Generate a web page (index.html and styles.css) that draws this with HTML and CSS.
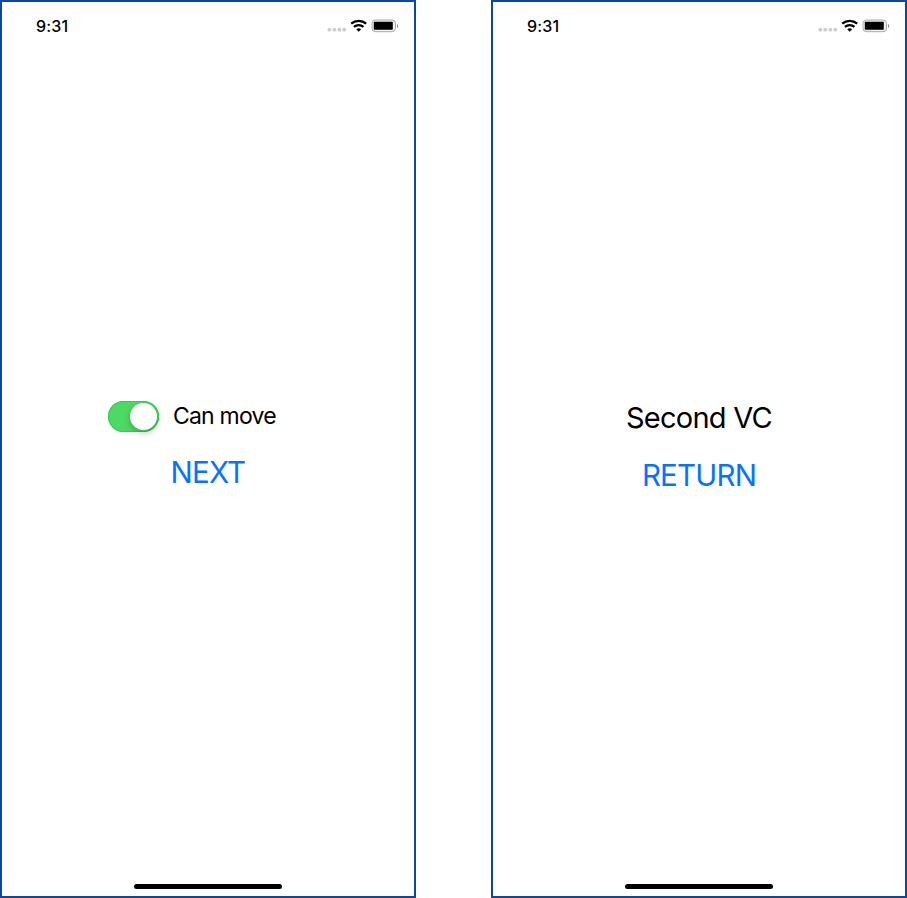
FILE: index.html
```html
<!DOCTYPE html>
<html lang="en">
<head>
<meta charset="utf-8">
<title>Can move</title>
<link rel="stylesheet" href="styles.css">
</head>
<body>
<main class="screens">
  <section class="phone">
    <header class="status">
      <span class="time">9:31</span>
      <svg class="indicators" width="72" height="16" viewBox="0 0 72 16">
        <g fill="#ccc"><circle cx="3.300" cy="12.700" r="1.900"/><circle cx="8.300" cy="12.700" r="1.900"/><circle cx="13.300" cy="12.700" r="1.900"/><circle cx="18.200" cy="12.700" r="1.900"/></g>
        <g fill="none" stroke="#000" stroke-width="2.2"><path d="M25.2 6.7a11.500 11.500 0 0 1 15 0"/><path d="M27.900 9.900a7.300 7.300 0 0 1 9.600 0"/></g>
        <path d="M30.200 12.200a4 4 0 0 1 5 0L32.700 14.700z"/>
        <rect x="46" y="3" width="23.500" height="11.700" rx="3.500" fill="#eee" stroke="#aaa"/>
        <rect x="47.800" y="4.800" width="19" height="8" rx=".7"/>
        <path d="M71 7v4q1-.7 1-2t-1-2" fill="#777"/>
      </svg>
    </header>
    <div class="content">
      <div class="setting">
        <span class="switch"><span class="knob"></span></span>
        <span class="label">Can move</span>
      </div>
      <a class="action next">NEXT</a>
    </div>
    <div class="home"></div>
  </section>
  <section class="phone">
    <header class="status">
      <span class="time">9:31</span>
      <svg class="indicators" width="72" height="16" viewBox="0 0 72 16">
        <g fill="#ccc"><circle cx="3.300" cy="12.700" r="1.900"/><circle cx="8.300" cy="12.700" r="1.900"/><circle cx="13.300" cy="12.700" r="1.900"/><circle cx="18.200" cy="12.700" r="1.900"/></g>
        <g fill="none" stroke="#000" stroke-width="2.2"><path d="M25.2 6.7a11.500 11.500 0 0 1 15 0"/><path d="M27.900 9.900a7.300 7.300 0 0 1 9.600 0"/></g>
        <path d="M30.200 12.200a4 4 0 0 1 5 0L32.700 14.700z"/>
        <rect x="46" y="3" width="23.500" height="11.700" rx="3.500" fill="#eee" stroke="#aaa"/>
        <rect x="47.800" y="4.800" width="19" height="8" rx=".7"/>
        <path d="M71 7v4q1-.7 1-2t-1-2" fill="#777"/>
      </svg>
    </header>
    <div class="content">
      <h1 class="title">Second VC</h1>
      <a class="action return">RETURN</a>
    </div>
    <div class="home"></div>
  </section>
</main>
</body>
</html>
```
FILE: styles.css
```css
* { box-sizing: border-box; }
body { margin: 0; background: #fff; color: #000; font-family: Inter, sans-serif; }
.screens { display: flex; justify-content: space-between; width: 907px; height: 898px; }
.phone { display: flex; flex-direction: column; width: 416px; height: 898px; border: 2px solid #11479b; }
.status { display: flex; justify-content: space-between; height: 48px; padding: 15px 16px 0 34px; }
.time { font-size: 16px; line-height: 18px; font-weight: 500; letter-spacing: .2px; }
.content { display: flex; flex: 1; flex-direction: column; align-items: center; padding-top: 350.5px; }
.setting { display: flex; align-items: center; width: 200px; height: 31px; gap: 14px; }
.switch { display: flex; justify-content: flex-end; width: 51px; height: 31px; padding: 2px; border-radius: 16px; background: #4cd964; box-shadow: inset 0 0 0 1px #30ce50; }
.knob { width: 27px; height: 27px; border-radius: 50%; background: #fff; box-shadow: 0 3px 7px rgba(0,0,0,.22); }
.label { font-size: 23px; line-height: 30px; letter-spacing: -.8px; white-space: nowrap; }
.action { color: #0673ff; font-size: 29.5px; line-height: 36px; letter-spacing: -.8px; }
.next { margin-top: 22.5px; }
.title { margin: 0; font-size: 29px; line-height: 34px; font-weight: 400; letter-spacing: -.75px; }
.return { margin-top: 22.5px; }
.home { flex: none; width: 148px; height: 5px; margin: 0 auto 7px; border-radius: 3px; background: #000; }
```
